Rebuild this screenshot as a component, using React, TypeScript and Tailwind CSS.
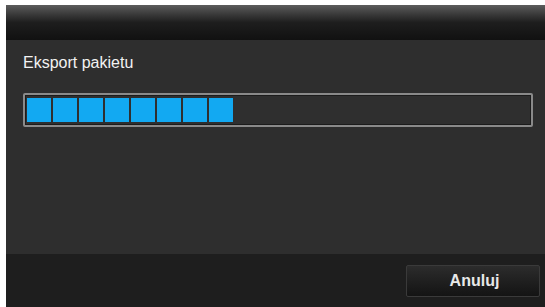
import React from "react";

export default function App() {
  const blocks = Array.from({ length: 8 });
  return (
    <div className="w-[545px] h-[307px] bg-white pl-[6px] pt-[5px] overflow-hidden" style={{ fontFamily: '"Liberation Sans", Arial, sans-serif' }}>
      <div className="w-[539px] h-[302px] flex flex-col bg-[#2e2e2e]">
        <div className="h-[35px] bg-gradient-to-b from-[#5c5c5c] via-[#1e1e1e] to-[#111111]" />
        <div className="flex-1 flex flex-col pl-[17px] pr-[7px]">
          <div className="pt-[14px] text-[16px] leading-[18px] text-[#f2f2f2]">Eksport pakietu</div>
          <div className="mt-[21px] w-[510px] h-[34px] border-2 border-[#8a8a8a] rounded-[2px] bg-[#1c1c1c] p-[1px]">
            <div className="h-full bg-[#2f2f2f] flex items-center gap-[2px] pl-[1px] py-[2px]">
              {blocks.map((_, i) => (
                <div key={i} className="w-[24px] h-full bg-[#12a9f2]" />
              ))}
            </div>
          </div>
        </div>
        <div className="h-[53px] bg-[#1e1e1e] flex items-center justify-end pr-[5px] pt-[1px]">
          <button className="w-[134px] h-[32px] border border-[#3a3a3a] rounded-[2px] bg-gradient-to-b from-[#2c2c2c] to-[#141414] text-[16px] font-bold text-[#e8e8e8] pl-[3px]">
            Anuluj
          </button>
        </div>
      </div>
    </div>
  );
}
